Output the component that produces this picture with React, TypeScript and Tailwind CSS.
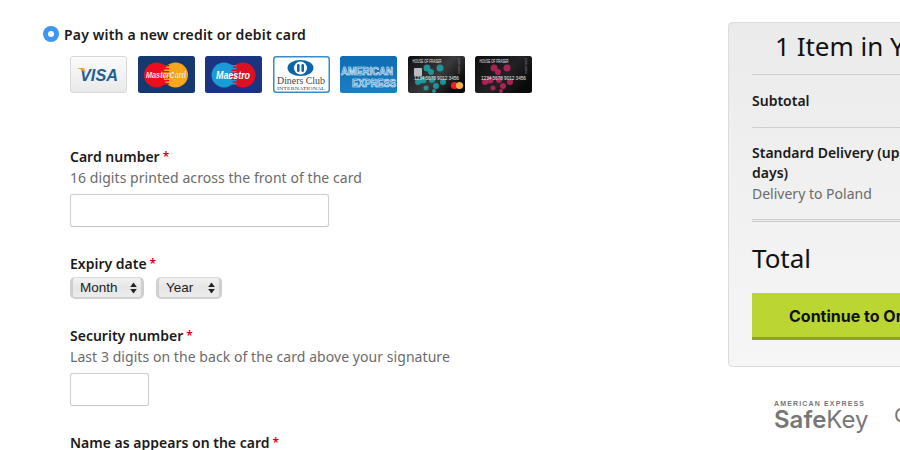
import React from "react";

function Req() {
  return <span className="text-[#d0021b] font-semibold text-[12px] align-[1px] ml-[3px]">*</span>;
}

function CardFrame({ children }: { children: React.ReactNode }) {
  return <svg width="57" height="37" viewBox="0 0 57 37" className="block shrink-0">{children}</svg>;
}

function Stripes({ x, w, color }: { x: number; w: number; color: string }) {
  const ys = [9, 12, 15, 18, 21, 24, 27];
  return (
    <g>
      {ys.map((y) => (
        <rect key={y} x={x} y={y} width={w} height="1.4" fill={color} />
      ))}
    </g>
  );
}

function Visa() {
  return (
    <CardFrame>
      <defs>
        <linearGradient id="visaG" x1="0" y1="0" x2="0" y2="1">
          <stop offset="0" stopColor="#fbfbfb" />
          <stop offset="1" stopColor="#e9e9e9" />
        </linearGradient>
      </defs>
      <rect x="0.5" y="0.5" width="56" height="36" rx="2.5" fill="url(#visaG)" stroke="#d8d8d8" />
      <text x="10" y="25" textLength="38" lengthAdjust="spacingAndGlyphs" fontFamily="'Liberation Sans',sans-serif" fontWeight="700" fontStyle="italic" fontSize="17" fill="#1e6096">VISA</text>
      <path d="M7 12 L14 12 L16 17 Q12 13.5 7 12Z" fill="#f0a72b" />
    </CardFrame>
  );
}

function MasterCard() {
  return (
    <CardFrame>
      <rect x="0" y="0" width="57" height="37" rx="2.5" fill="#15386f" />
      <circle cx="18.5" cy="19" r="12.5" fill="#ee0d1c" />
      <circle cx="37.5" cy="19" r="12.5" fill="#f8a61d" />
      <Stripes x={25} w={6} color="#ee0d1c" />
      <text x="8" y="22" textLength="40" lengthAdjust="spacingAndGlyphs" fontFamily="'Liberation Sans',sans-serif" fontWeight="700" fontStyle="italic" fontSize="9.5" fill="#fff" stroke="#7a3030" strokeWidth="0.15">MasterCard</text>
    </CardFrame>
  );
}

function Maestro() {
  return (
    <CardFrame>
      <rect x="0" y="0" width="57" height="37" rx="2.5" fill="#1b3482" />
      <circle cx="19" cy="19" r="12.5" fill="#1a9ad7" />
      <circle cx="38" cy="19" r="12.5" fill="#dd1023" />
      <Stripes x={25.5} w={6} color="#1a9ad7" />
      <text x="11" y="22.5" textLength="34" lengthAdjust="spacingAndGlyphs" fontFamily="'Liberation Sans',sans-serif" fontWeight="700" fontStyle="italic" fontSize="10.5" fill="#fff">Maestro</text>
    </CardFrame>
  );
}

function Diners() {
  return (
    <CardFrame>
      <rect x="0.75" y="0.75" width="55.5" height="35.5" rx="2.5" fill="#fff" stroke="#3a8cc4" strokeWidth="1.5" />
      <ellipse cx="27.5" cy="12" rx="13" ry="8" fill="#0c67a8" />
      <circle cx="27.5" cy="12" r="6.5" fill="#fff" />
      <rect x="24" y="8" width="2.6" height="8" rx="1.3" fill="#0c67a8" />
      <rect x="28.4" y="8" width="2.6" height="8" rx="1.3" fill="#0c67a8" />
      <text x="4" y="28" textLength="48" lengthAdjust="spacingAndGlyphs" fontFamily="'Liberation Serif',serif" fontSize="9.5" fill="#444">Diners Club</text>
      <text x="4" y="33.5" textLength="48" lengthAdjust="spacingAndGlyphs" fontFamily="'Liberation Serif',serif" fontSize="4.8" fill="#444">INTERNATIONAL</text>
    </CardFrame>
  );
}

function Amex() {
  return (
    <CardFrame>
      <defs>
        <linearGradient id="amexG" x1="0" y1="0" x2="0" y2="1">
          <stop offset="0" stopColor="#0f6cb3" />
          <stop offset="1" stopColor="#1c7fc0" />
        </linearGradient>
      </defs>
      <rect x="0" y="0" width="57" height="37" rx="2.5" fill="url(#amexG)" />
      <text x="1" y="18.5" textLength="52" lengthAdjust="spacingAndGlyphs" fontFamily="'Liberation Sans',sans-serif" fontWeight="700" fontSize="11.5" fill="#1b78bd" stroke="#e6f2fa" strokeWidth="0.7">AMERICAN</text>
      <text x="12" y="30.5" textLength="44" lengthAdjust="spacingAndGlyphs" fontFamily="'Liberation Sans',sans-serif" fontWeight="700" fontSize="11.5" fill="#1b78bd" stroke="#e6f2fa" strokeWidth="0.7">EXPRESS</text>
    </CardFrame>
  );
}

function Fraser({ color, mc }: { color: string; mc?: boolean }) {
  const dots: [number, number, number][] = [
    [19, 12, 3.5], [23, 16, 3], [32, 12, 3.5], [15, 24, 3.5], [24, 24, 3], [35, 26, 3], [28, 30, 3], [18, 32, 2.5], [10, 26, 3], [26, 35, 2],
  ];
  const id = mc ? "hofA" : "hofB";
  return (
    <CardFrame>
      <defs>
        <linearGradient id={id} x1="0" y1="0" x2="1" y2="0.6">
          <stop offset="0" stopColor="#0e0e10" />
          <stop offset="0.62" stopColor={mc ? "#3a3a3c" : "#222224"} />
          <stop offset="1" stopColor="#0a0a0b" />
        </linearGradient>
      </defs>
      <rect x="0" y="0" width="57" height="37" rx="2.5" fill={`url(#${id})`} />
      {dots.map(([x, y, r], i) => (
        <circle key={i} cx={x} cy={y} r={r} fill={color} opacity="0.85" />
      ))}
      <text x="4.5" y="7" textLength="29" lengthAdjust="spacingAndGlyphs" fontFamily="'Liberation Sans',sans-serif" fontSize="5" fill="#e8e8e8">HOUSE OF FRASER</text>
      <text x="6" y="23.5" textLength="45" lengthAdjust="spacing" fontFamily="'Liberation Sans',sans-serif" fontSize="4.8" fill="#e6e6e6">1234 5678 9012 3456</text>
      <text x="52" y="18" transform="rotate(-90 52 18)" fontFamily="'Liberation Sans',sans-serif" fontSize="3.2" fill="#888">mastercard</text>
      {mc && <rect x="6" y="12" width="8" height="8" rx="1" fill="#b9bcc0" />}
      {mc && (
        <g>
          <circle cx="46.5" cy="29.5" r="3.6" fill="#e9202c" />
          <circle cx="51.5" cy="29.5" r="3.6" fill="#f7b23c" />
        </g>
      )}
    </CardFrame>
  );
}

function Select({ label, width }: { label: string; width: string }) {
  return (
    <div className={`${width} h-[22px] flex items-center justify-between pl-[7px] pr-[4px] pt-[1px] rounded-[5px] bg-gradient-to-b from-[#f1f1f1] via-[#e6e6e6] to-[#ececec] border-x-[3px] border-x-[#cfcfcf] border-b-2 border-b-[#d0d0d0] border-t border-t-[#dcdcdc] font-['Liberation_Sans',sans-serif] text-[13.5px] text-[#222]`}>
      <span>{label}</span>
      <svg width="7" height="12" viewBox="0 0 7 12">
        <path d="M3.5 0.5 L6.8 5 H0.2Z M3.5 11.5 L6.8 7 H0.2Z" fill="#222" />
      </svg>
    </div>
  );
}

function Label({ children }: { children: React.ReactNode }) {
  return <div className="text-[14px] leading-[20px] font-semibold text-[#1a1a1a]">{children}<Req /></div>;
}

function Hint({ children }: { children: React.ReactNode }) {
  return <div className="text-[14px] leading-[20px] tracking-[0.06px] pt-[1px] text-[#6b6b6b]">{children}</div>;
}

function Input({ width }: { width: string }) {
  return <div className={`${width} h-[33px] mt-[6px] bg-white border border-[#cfcfcf] rounded-[3px] border-b-[#c6c6c6] shadow-[0_0_1px_#ddd]`} />;
}

export default function App() {
  return (
    <div className="w-[900px] h-[450px] overflow-hidden bg-white flex font-['Noto_Sans',sans-serif]">
      <div className="w-[728px] shrink-0 pt-[24px] pl-[43px]">
        <div className="flex items-center gap-[5px] h-[20px]">
          <span className="w-[16px] h-[16px] rounded-full bg-[#3d95f5] flex items-center justify-center">
            <span className="w-[6px] h-[6px] rounded-full bg-white" />
          </span>
          <span className="text-[14px] font-semibold tracking-[0.17px] text-[#1a1a1a]">Pay with a new credit or debit card</span>
        </div>
        <div className="pl-[27px]">
          <div className="flex gap-[10.5px] mt-[12px]">
            <Visa />
            <MasterCard />
            <Maestro />
            <Diners />
            <Amex />
            <Fraser color="#1fa3a8" mc />
            <Fraser color="#c2245f" />
          </div>
          <div className="mt-[54px]">
            <Label>Card number</Label>
            <Hint>16 digits printed across the front of the card</Hint>
            <Input width="w-[259px]" />
          </div>
          <div className="mt-[27px]">
            <Label>Expiry date</Label>
            <div className="flex gap-[12px] mt-[3px]">
              <Select label="Month" width="w-[74px]" />
              <Select label="Year" width="w-[66px]" />
            </div>
          </div>
          <div className="mt-[27px]">
            <Label>Security number</Label>
            <Hint>Last 3 digits on the back of the card above your signature</Hint>
            <Input width="w-[79px]" />
          </div>
          <div className="mt-[27px]">
            <Label>Name as appears on the card</Label>
          </div>
        </div>
      </div>
      <div className="w-[300px] shrink-0">
        <div className="mt-[22px] h-[345px] rounded-[4px] border border-[#dcdcdc] bg-gradient-to-b from-[#ebebeb] to-[#f6f6f6] pl-[23px]">
          <div className="h-[52px] border-b border-b-[#cfcfcf] text-[26px] leading-[46px] text-[#111] pl-[23px] whitespace-nowrap">1 Item in Your Bag</div>
          <div className="h-[53px] border-b border-b-[#cfcfcf] text-[14px] font-semibold text-[#1a1a1a] leading-[51px]">Subtotal</div>
          <div className="h-[94px] border-b-[3px] border-double border-b-[#c8c8c8] pt-[15px] text-[14px] leading-[20px] whitespace-nowrap">
            <div className="font-semibold text-[#1a1a1a]">Standard Delivery (up to 5 working<br />days)</div>
            <div className="text-[#6b6b6b] mt-[1px]">Delivery to Poland</div>
          </div>
          <div className="h-[71px] text-[26px] text-[#111] pt-[18px] leading-[36px]">Total</div>
          <div className="h-[47px] border-b-[3px] border-b-[#8da41e] bg-[#bbd632] text-[16px] font-bold text-[#111] leading-[46px] pl-[37px] whitespace-nowrap font-['Inter',sans-serif]">Continue to Order Summary</div>
        </div>
        <div className="mt-[33px] flex items-start pl-[46px] gap-[26px]">
          <div className="text-[#777] w-[94px]">
            <div className="text-[7px] h-[7px] leading-[7px] font-bold tracking-[1.15px] whitespace-nowrap font-['Liberation_Sans',sans-serif]">AMERICAN EXPRESS</div>
            <div className="text-[24px] leading-[24px] mt-[1px] font-['Inter',sans-serif] whitespace-nowrap"><span className="font-semibold">Safe</span><span>Key</span></div>
          </div>
          <div className="text-[#777] text-[20px] leading-[28px] mt-[1px]">Ce</div>
        </div>
      </div>
    </div>
  );
}
